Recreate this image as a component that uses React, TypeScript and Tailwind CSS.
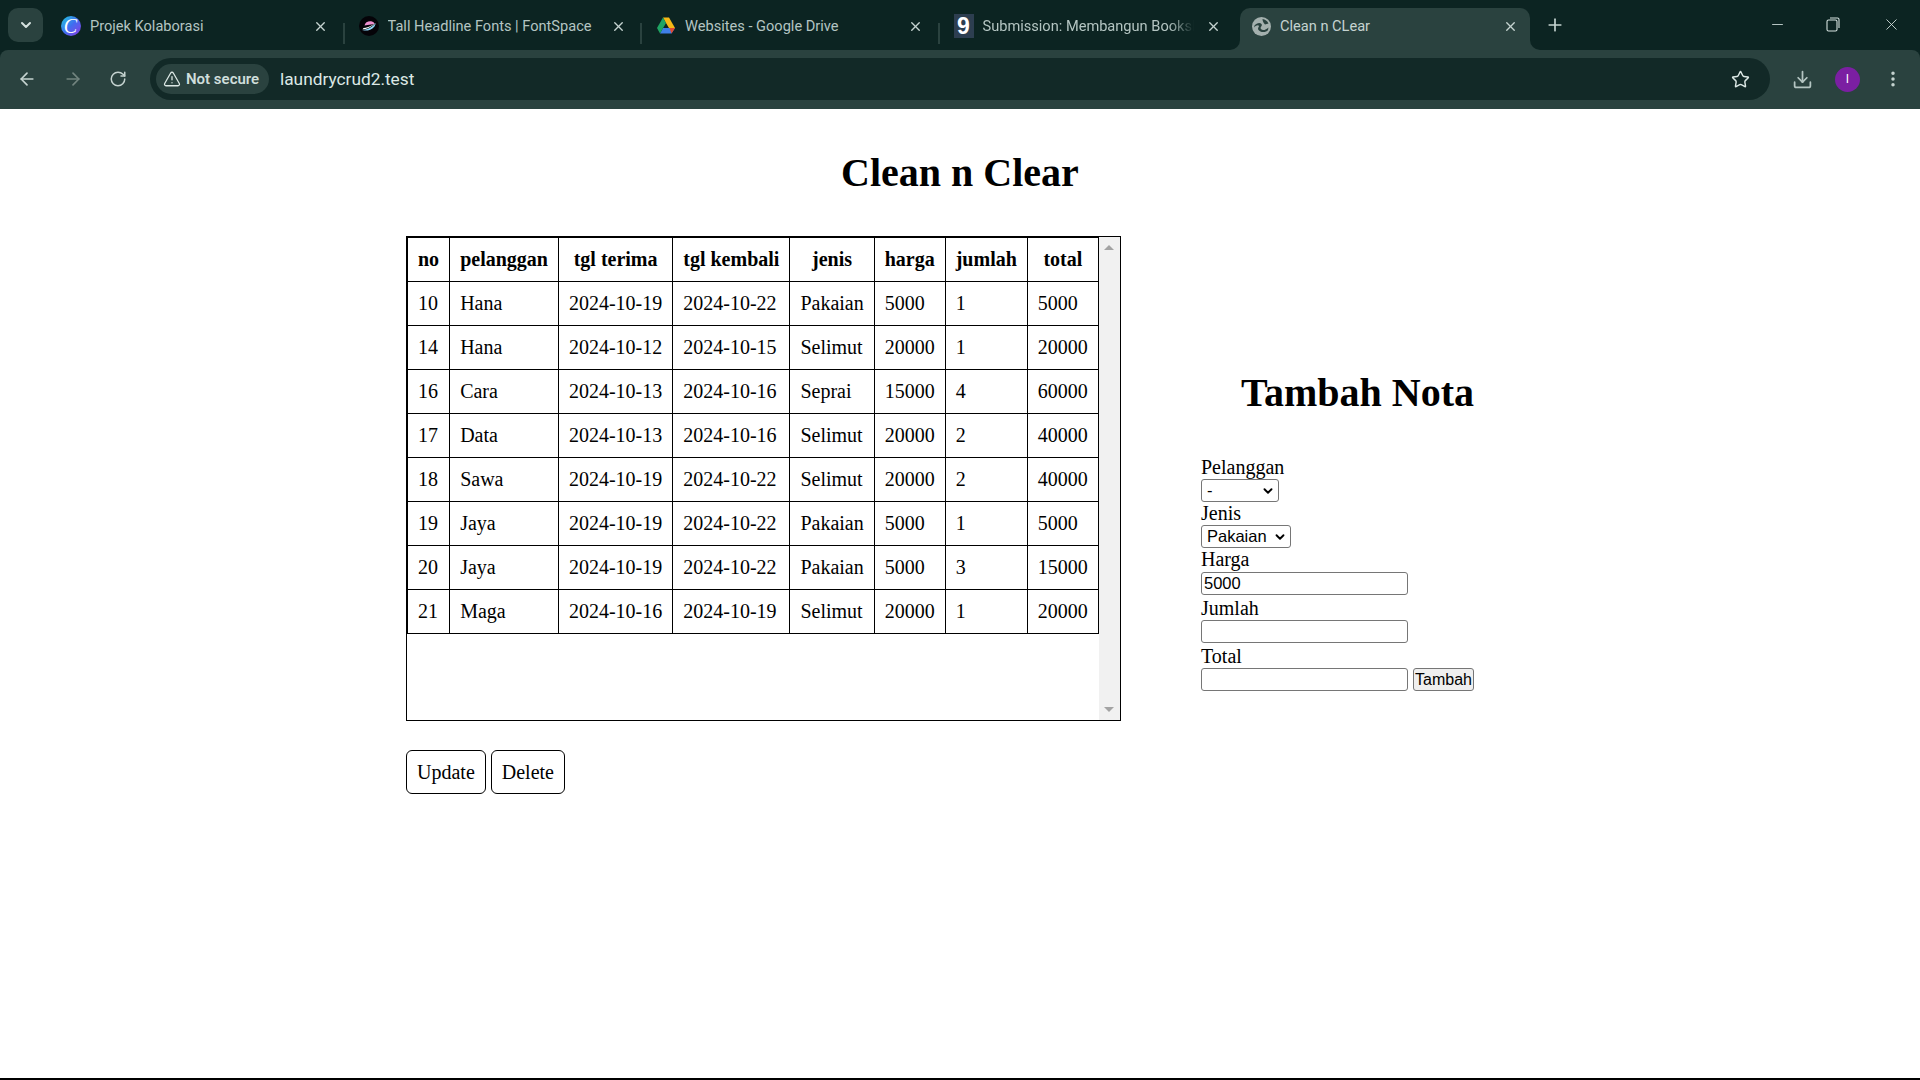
import React from "react";
import { ArrowLeft, ArrowRight, ChevronDown, Download, EllipsisVertical, Minus, Plus, RotateCw, Star, TriangleAlert, X } from "lucide-react";

type Nota = {
  no: number;
  pelanggan: string;
  terima: string;
  kembali: string;
  jenis: string;
  harga: number;
  jumlah: number;
  total: number;
};

const notas: Nota[] = [
  { no: 10, pelanggan: "Hana", terima: "2024-10-19", kembali: "2024-10-22", jenis: "Pakaian", harga: 5000, jumlah: 1, total: 5000 },
  { no: 14, pelanggan: "Hana", terima: "2024-10-12", kembali: "2024-10-15", jenis: "Selimut", harga: 20000, jumlah: 1, total: 20000 },
  { no: 16, pelanggan: "Cara", terima: "2024-10-13", kembali: "2024-10-16", jenis: "Seprai", harga: 15000, jumlah: 4, total: 60000 },
  { no: 17, pelanggan: "Data", terima: "2024-10-13", kembali: "2024-10-16", jenis: "Selimut", harga: 20000, jumlah: 2, total: 40000 },
  { no: 18, pelanggan: "Sawa", terima: "2024-10-19", kembali: "2024-10-22", jenis: "Selimut", harga: 20000, jumlah: 2, total: 40000 },
  { no: 19, pelanggan: "Jaya", terima: "2024-10-19", kembali: "2024-10-22", jenis: "Pakaian", harga: 5000, jumlah: 1, total: 5000 },
  { no: 20, pelanggan: "Jaya", terima: "2024-10-19", kembali: "2024-10-22", jenis: "Pakaian", harga: 5000, jumlah: 3, total: 15000 },
  { no: 21, pelanggan: "Maga", terima: "2024-10-16", kembali: "2024-10-19", jenis: "Selimut", harga: 20000, jumlah: 1, total: 20000 },
];

const headers = ["no", "pelanggan", "tgl terima", "tgl kembali", "jenis", "harga", "jumlah", "total"];

function CanvaIcon() {
  return (
    <span className="flex h-5 w-5 items-center justify-center rounded-full bg-gradient-to-br from-[#19c9d9] via-[#3f6cf0] to-[#7c2fe0] pr-[1px] font-['Liberation_Serif',serif] text-[20px] italic leading-none text-white">
      C
    </span>
  );
}

function PlanetIcon() {
  return (
    <svg width="20" height="20" viewBox="0 0 20 20">
      <circle cx="10" cy="10" r="10" fill="#050308" />
      <path d="M5.5 9.5 C6 6 10 4.5 13 5.5 C14.5 6 15.5 7 15.5 8Z" fill="#f08fd0" />
      <path d="M3 14 C7 14 13 11.5 17 7 L15.5 10.5 C12.5 14 8 15 5.5 14.5Z" fill="#8fd8f8" />
      <path d="M3.5 13.5 C7.5 13 12 11 16.5 7.2 L15 8 C11 10.5 7 12 4.5 12Z" fill="#ffffff" />
    </svg>
  );
}

function DriveIcon() {
  return (
    <svg width="20" height="20" viewBox="0 0 20 20">
      <path d="M7 12H19L15.5 17.5H4Z" fill="#3f7fe8" />
      <path d="M7 1.5H13L19 12H13L10 7Z" fill="#f7b916" />
      <path d="M7 1.5L10 7L4 17.5L1 12Z" fill="#1fa463" />
      <path d="M19 12L15.5 17.5L13.5 12Z" fill="#e5482f" />
    </svg>
  );
}

function DicodingIcon() {
  return (
    <span className="flex h-6 w-5 items-center justify-center bg-[#2d3e50] font-['Liberation_Sans',sans-serif] text-[23px] font-bold leading-none text-white">
      9
    </span>
  );
}

function GlobeIcon() {
  return (
    <svg width="19" height="19" viewBox="0 0 19 19">
      <circle cx="9.5" cy="9.5" r="9.5" fill="#a4b0ae" />
      <path d="M2.5 8.5C4.5 6 8 5 9.5 7C11 9 7.5 10 9 12C10.5 14 14 13 16.5 10.5L16 13C14 16 8 15.5 6.5 13C5 10.5 8 9.5 6.5 8.5C5.5 8 3.5 9 2 10.5Z" fill="#2a423f" />
      <path d="M10.5 2C13 2.5 15.5 4 16.5 6.5L13 7.5C11.5 6 10.5 4 10.5 2Z" fill="#2a423f" />
    </svg>
  );
}

function Tab({ icon, title, active, fade }: { icon: React.ReactNode; title: string; active?: boolean; fade?: boolean }) {
  return (
    <div
      className={`relative flex h-[42px] w-[290px] shrink-0 items-center rounded-t-[10px] pb-[6px] pl-[11px] pr-[12px] text-[14.6px] ${
        active ? "bg-[#2a423f] text-[#c5d3d0]" : "text-[#b4c5c2]"
      }`}
    >
      {active && (
        <>
          <span className="absolute -left-[10px] bottom-0 h-[10px] w-[10px] bg-[#2a423f]">
            <span className="block h-full w-full rounded-br-[10px] bg-[#0c2422]" />
          </span>
          <span className="absolute -right-[10px] bottom-0 h-[10px] w-[10px] bg-[#2a423f]">
            <span className="block h-full w-full rounded-bl-[10px] bg-[#0c2422]" />
          </span>
        </>
      )}
      <span className="flex w-5 shrink-0 justify-center">{icon}</span>
      <span
        className={`ml-[9px] flex-1 overflow-hidden whitespace-nowrap ${
          fade ? "[mask-image:linear-gradient(to_right,black_88%,transparent)]" : ""
        }`}
      >
        {title}
      </span>
      <X size={15} strokeWidth={2.2} className="ml-3 shrink-0 text-[#c5d3d0]" />
    </div>
  );
}

function TabSeparator({ hidden }: { hidden?: boolean }) {
  return (
    <div className="flex w-[7.5px] shrink-0 justify-center pb-[6px]">
      {!hidden && <span className="h-[21px] w-[2px] bg-[#2a423f]" />}
    </div>
  );
}

function BrowserChrome() {
  return (
    <header className="shrink-0 bg-[#0c2422] font-['Roboto',sans-serif]">
      <div className="flex h-[50px] items-end">
        <div className="mb-[8px] ml-2 mr-[7px] flex h-[34px] w-[35px] items-center justify-center rounded-[10px] bg-[#2a423f]">
          <ChevronDown size={16} strokeWidth={3} className="text-[#d5e2df]" />
        </div>
        <Tab icon={<CanvaIcon />} title="Projek Kolaborasi" />
        <TabSeparator />
        <Tab icon={<PlanetIcon />} title="Tall Headline Fonts | FontSpace" />
        <TabSeparator />
        <Tab icon={<DriveIcon />} title="Websites - Google Drive" />
        <TabSeparator />
        <Tab icon={<DicodingIcon />} title="Submission: Membangun Bookshelf" fade />
        <TabSeparator hidden />
        <Tab icon={<GlobeIcon />} title="Clean n CLear" active />
        <Plus size={20} strokeWidth={2} className="mb-[15px] ml-[15px] text-[#c5d3d0]" />
        <div className="mb-[16px] ml-auto flex items-center text-[#d5e2df]">
          <Minus size={17} strokeWidth={1.2} className="mr-[40px]" />
          <svg width="14" height="15" viewBox="0 0 14 15" fill="none" stroke="currentColor" strokeWidth="1.1" className="mr-[42px]">
            <rect x="1" y="3" width="10" height="11" rx="1.5" />
            <path d="M4 1h7.5A1.5 1.5 0 0 1 13 2.5V11" />
          </svg>
          <X size={19} strokeWidth={1.1} className="mr-[19px]" />
        </div>
      </div>
      <div className="flex h-[59px] items-center rounded-t-[8px] bg-[#2a423f] pb-[1px] text-[#c5d3d0]">
        <ArrowLeft size={20} strokeWidth={2} className="ml-[17px]" />
        <ArrowRight size={20} strokeWidth={2} className="ml-[26px] text-[#72847f]" />
        <RotateCw size={18} strokeWidth={2} className="ml-[26px]" />
        <div className="ml-[23px] flex h-[42px] w-[1620px] items-center rounded-full bg-[#122927]">
          <div className="ml-[6px] flex h-[30px] w-[113px] items-center rounded-full bg-[#2a423f] pl-[7px]">
            <TriangleAlert size={18} strokeWidth={1.7} className="text-[#dce8e5]" />
            <span className="ml-[5px] whitespace-nowrap text-[15px] font-semibold text-[#cfdedb]">Not secure</span>
          </div>
          <span className="ml-[11px] text-[17.3px] text-[#dce8e5]">laundrycrud2.test</span>
          <Star size={19} strokeWidth={1.8} className="ml-auto mr-[20px] text-[#dce8e5]" />
        </div>
        <Download size={21} strokeWidth={2} className="ml-[22px] text-[#b4c5c2]" />
        <span className="ml-[22px] flex h-[25px] w-[25px] items-center justify-center rounded-full bg-[#7b1fa2] text-[12px] text-white">I</span>
        <EllipsisVertical size={20} strokeWidth={2.2} className="ml-[23px] text-[#c5d3d0]" />
      </div>
    </header>
  );
}

function NotaTable() {
  return (
    <table className="self-start border-collapse border border-black text-left">
      <thead>
        <tr>
          {headers.map((h) => (
            <th key={h} className="border border-black p-[10px] text-center font-bold">
              {h}
            </th>
          ))}
        </tr>
      </thead>
      <tbody>
        {notas.map((n) => (
          <tr key={n.no}>
            <td className="border border-black p-[10px]">{n.no}</td>
            <td className="border border-black p-[10px]">{n.pelanggan}</td>
            <td className="border border-black p-[10px]">{n.terima}</td>
            <td className="border border-black p-[10px]">{n.kembali}</td>
            <td className="border border-black p-[10px]">{n.jenis}</td>
            <td className="border border-black p-[10px]">{n.harga}</td>
            <td className="border border-black p-[10px]">{n.jumlah}</td>
            <td className="border border-black p-[10px]">{n.total}</td>
          </tr>
        ))}
      </tbody>
    </table>
  );
}

function Scrollbar() {
  return (
    <div className="flex w-[21px] shrink-0 flex-col items-center justify-between bg-[#f1f1f1] py-[8px]">
      <span className="h-0 w-0 border-x-[5px] border-b-[5px] border-x-transparent border-b-[#a3a3a3]" />
      <span className="h-0 w-0 border-x-[5px] border-t-[5px] border-x-transparent border-t-[#a3a3a3]" />
    </div>
  );
}

function Select({ width, options }: { width: string; options: string[] }) {
  return (
    <div className={`relative ${width}`}>
      <select className="block h-[23px] w-full appearance-none rounded-[3px] border border-[#767676] bg-white pl-[5px] font-['Liberation_Sans',sans-serif] text-[16.5px] leading-none">
        {options.map((o) => (
          <option key={o}>{o}</option>
        ))}
      </select>
      <ChevronDown size={14} strokeWidth={3.2} className="pointer-events-none absolute right-[4px] top-[5px]" />
    </div>
  );
}

function TambahForm() {
  const fieldClass = "block h-[23px] w-[207px] rounded-[3px] border border-[#767676] bg-white px-[2px] font-['Liberation_Sans',sans-serif] text-[16.5px] leading-none";

  return (
    <div className="mt-[133px] w-[313px]">
      <h2 className="mb-10 text-center text-[40px] font-bold">Tambah Nota</h2>
      <form>
        <label className="block">Pelanggan</label>
        <Select width="w-[78px]" options={["-", "Hana"]} />
        <label className="block">Jenis</label>
        <Select width="w-[90px]" options={["Pakaian", "Selimut"]} />
        <label className="mb-[1px] block">Harga</label>
        <input className={fieldClass} defaultValue="5000" />
        <label className="mt-[2px] block">Jumlah</label>
        <input className={fieldClass} />
        <label className="mt-[2px] block">Total</label>
        <div className="flex gap-[5px]">
          <input className={fieldClass} />
          <button type="button" className="h-[23px] rounded-[3px] border border-[#767676] bg-[#efefef] px-[1px] font-['Liberation_Sans',sans-serif] text-[16px] leading-none">
            Tambah
          </button>
        </div>
      </form>
    </div>
  );
}

export default function App() {
  return (
    <div className="flex h-screen flex-col overflow-hidden bg-white font-['Liberation_Serif',serif] text-[20px] leading-[normal] text-black">
      <BrowserChrome />
      <main className="flex-1">
        <h1 className="mb-10 mt-[40px] text-center text-[40px] font-bold">Clean n Clear</h1>
        <div className="flex items-start justify-center gap-20">
          {/* left: data table + actions */}
          <div className="w-[715px]">
            <div className="flex h-[485px] border border-black">
              <NotaTable />
              <Scrollbar />
            </div>
            <div className="mt-[29px] flex gap-[5px]">
              <button type="button" className="h-[44px] rounded-[6px] border border-black bg-white px-[10px]">Update</button>
              <button type="button" className="h-[44px] rounded-[6px] border border-black bg-white px-[10px]">Delete</button>
            </div>
          </div>
          <TambahForm />
        </div>
      </main>
      <div className="h-[2px] shrink-0 bg-black" />
    </div>
  );
}
